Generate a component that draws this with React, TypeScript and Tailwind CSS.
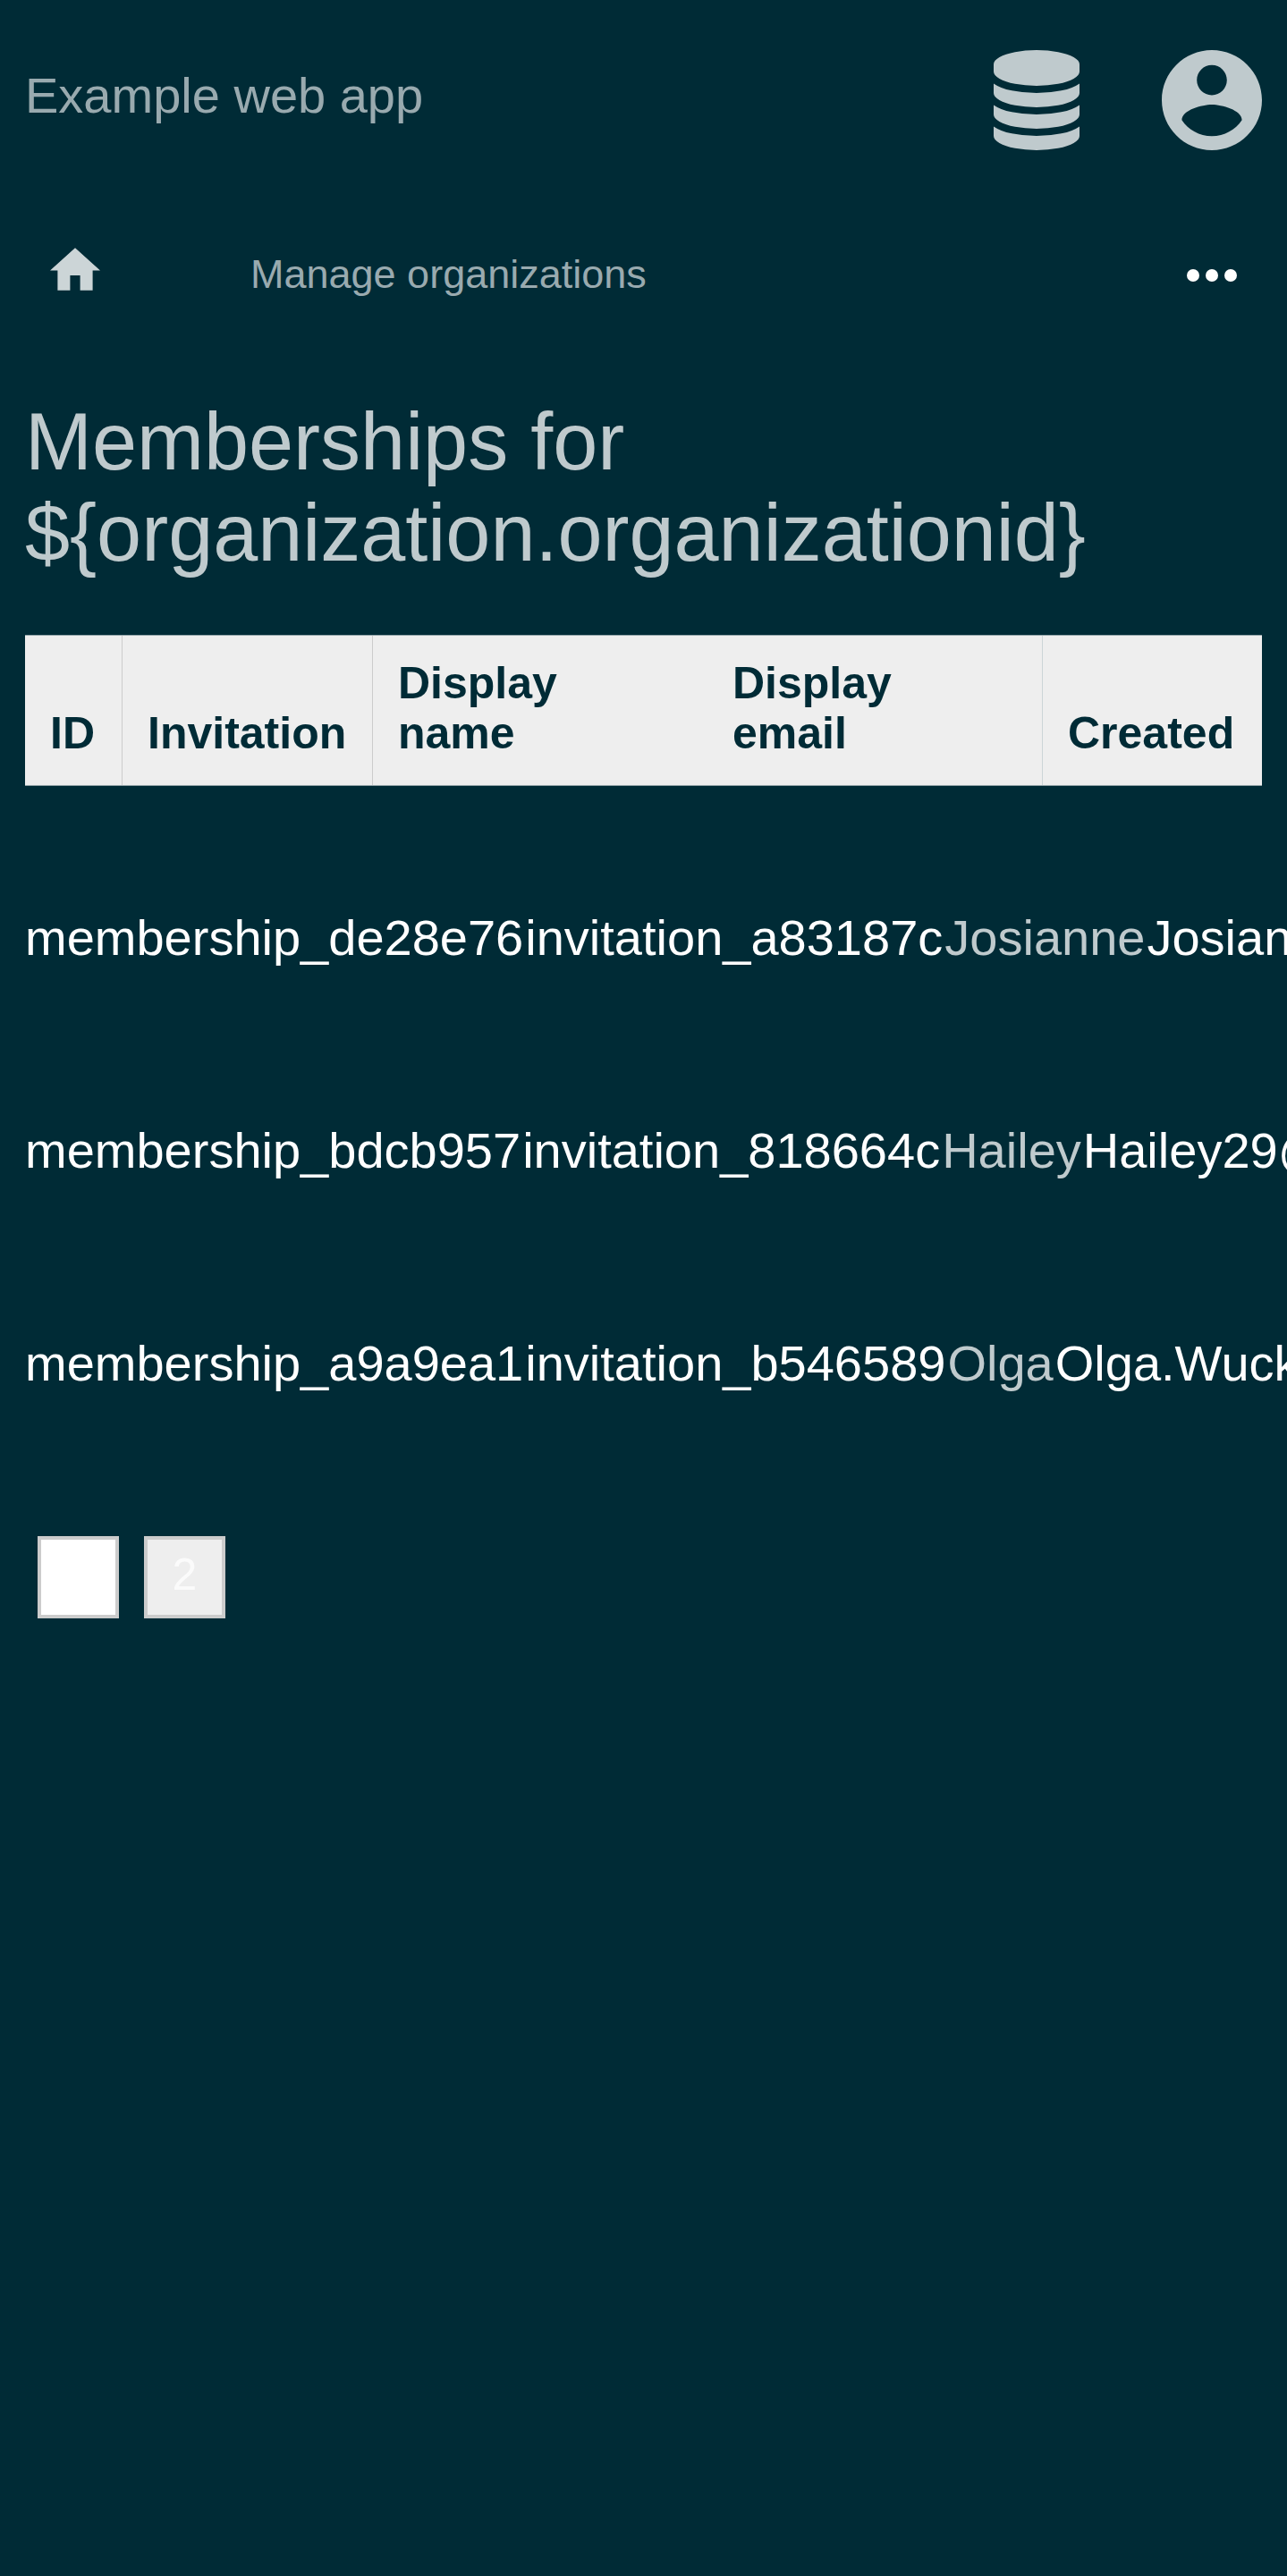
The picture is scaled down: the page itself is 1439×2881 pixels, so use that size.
const members = [
  { id: "membership_de28e76", invitation: "invitation_a83187c", name: "Josianne", email: "Josianne" },
  { id: "membership_bdcb957", invitation: "invitation_818664c", name: "Hailey", email: "Hailey29@" },
  { id: "membership_a9a9ea1", invitation: "invitation_b546589", name: "Olga", email: "Olga.Wuck" },
];

function DatabaseIcon() {
  return (
    <svg viewBox="0 0 1536 1792" className="h-28 w-24" fill="currentColor" aria-hidden="true">
      <path d="M768 768q237 0 443-43t325-127v170q0 69-103 128t-280 93.5-385 34.5-385-34.5-280-93.5-103-128v-170q119 84 325 127t443 43zm0 768q237 0 443-43t325-127v170q0 69-103 128t-280 93.5-385 34.5-385-34.5-280-93.5-103-128v-170q119 84 325 127t443 43zm0-384q237 0 443-43t325-127v170q0 69-103 128t-280 93.5-385 34.5-385-34.5-280-93.5-103-128v-170q119 84 325 127t443 43zM768 0q208 0 385 34.5t280 93.5 103 128v128q0 69-103 128t-280 93.5-385 34.5-385-34.5-280-93.5-103-128v-128q0-69 103-128t280-93.5 385-34.5z" />
    </svg>
  );
}

function AccountIcon() {
  return (
    <svg viewBox="2 2 20 20" className="size-28" fill="currentColor" aria-hidden="true">
      <path d="M12 2C6.48 2 2 6.48 2 12s4.48 10 10 10 10-4.48 10-10S17.52 2 12 2zm0 3c1.66 0 3 1.34 3 3s-1.34 3-3 3-3-1.34-3-3 1.34-3 3-3zm0 14.2c-2.5 0-4.71-1.28-6-3.22.03-1.99 4-3.08 6-3.08 1.99 0 5.97 1.09 6 3.08-1.29 1.94-3.5 3.22-6 3.22z" />
    </svg>
  );
}

function HomeIcon() {
  return (
    <svg viewBox="2 3 20 17" className="h-12 w-14" fill="currentColor" aria-hidden="true">
      <path d="M10 20v-6h4v6h5v-8h3L12 3 2 12h3v8z" />
    </svg>
  );
}

function MoreIcon() {
  return (
    <svg viewBox="0 0 56 62" className="h-[62px] w-14" fill="currentColor" aria-hidden="true">
      <circle cx="7" cy="31" r="7" />
      <circle cx="28" cy="31" r="7" />
      <circle cx="49" cy="31" r="7" />
    </svg>
  );
}

export default function App() {
  return (
    <div className="min-h-screen overflow-x-hidden bg-[#002b36] font-['Liberation_Sans',Arial,sans-serif] text-white">
      <header className="flex items-start justify-between px-7 py-14 text-[#bfcacd]">
        <a href="#" className="text-[56px] leading-[102px] text-[#99aaaf]">
          Example web app
        </a>
        <div className="flex gap-[92px]">
          <button type="button" aria-label="Data">
            <DatabaseIcon />
          </button>
          <button type="button" aria-label="Account">
            <AccountIcon />
          </button>
        </div>
      </header>

      <nav className="flex items-start px-14 pt-[53px]">
        <a href="#" aria-label="Home" className="text-[#ccd5d7]">
          <HomeIcon />
        </a>
        <a href="#" className="ml-[168px] text-[45px] leading-[60px] text-[#99aaaf]">
          Manage organizations
        </a>
        <button type="button" aria-label="More" className="ml-auto">
          <MoreIcon />
        </button>
      </nav>

      <main className="px-7 pt-[104px]">
        <h1 className="text-[90px] leading-[102px] text-[#bfcacd]">
          Memberships for
          <br />
          {"${organization.organizationid}"}
        </h1>

        <table className="mt-[63px] block">
          <thead className="block">
            <tr className="flex items-stretch border-y border-[#94a5a9] bg-[#eeeeee] text-left text-[50px] leading-14 font-bold text-[#002b36] *:flex *:items-end *:px-7 *:pt-[25px] *:pb-[30px]">
              <th scope="col" className="w-[108px] shrink-0">ID</th>
              <th scope="col" className="w-[280px] shrink-0 border-l border-[#cccccc]">Invitation</th>
              <th scope="col" className="flex-1 border-l border-[#cccccc]">
                <span>Display<br />name</span>
              </th>
              <th scope="col" className="flex-1">
                <span>Display<br />email</span>
              </th>
              <th scope="col" className="w-[246px] shrink-0 border-l border-[#ccd5d7]">Created</th>
            </tr>
          </thead>
          <tbody className="mt-[51px] block">
            {members.map((m) => (
              <tr key={m.id} className="flex gap-0.5 py-[87px] text-[56px] leading-16 whitespace-nowrap">
                <td>{m.id}</td>
                <td>{m.invitation}</td>
                <td className="text-[#bfcacd]">{m.name}</td>
                <td>{m.email}</td>
              </tr>
            ))}
          </tbody>
        </table>

        <div className="mt-[74px] ml-3.5 flex gap-7 text-[50px]">
          <button type="button" aria-current="page" className="flex h-[92px] w-[91px] justify-center border-4 border-[#cccccc] bg-white pt-[11px] leading-14 text-white">
            1
          </button>
          <button type="button" className="flex h-[92px] w-[91px] justify-center border-4 border-[#cccccc] bg-[#eeeeee] pt-[11px] leading-14 text-[#fbfbfb]">
            2
          </button>
        </div>
      </main>
    </div>
  );
}
